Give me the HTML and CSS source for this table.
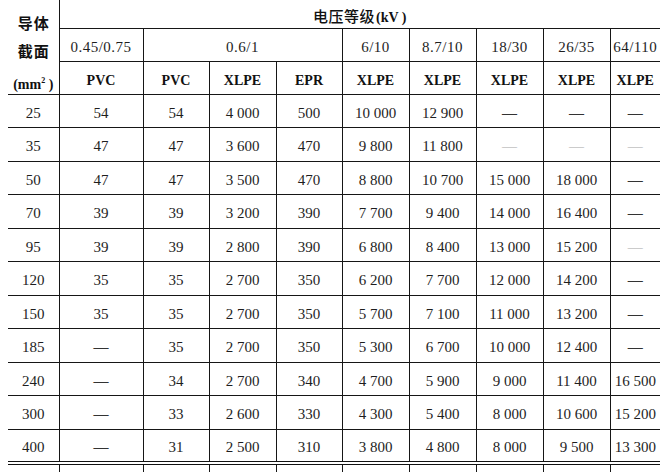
FILE: index.html
```html
<!DOCTYPE html>
<html lang="zh-CN">
<head>
<meta charset="utf-8">
<title>导体截面与电压等级</title>
<link rel="stylesheet" href="styles.css">
</head>
<body>
<div class="page">
<table class="t">
  <colgroup>
    <col class="c-lead"><col class="c-a"><col class="c-b"><col class="c-c"><col class="c-b">
    <col class="c-c"><col class="c-c"><col class="c-c"><col class="c-c"><col class="c-last">
  </colgroup>
  <tr class="h1">
    <th rowspan="3" class="lead">
      <div class="lead-box">
        <span class="cn l1">导体</span>
        <span class="cn l2">截面</span>
        <span class="unit l3">(mm<sup>2</sup> )</span>
      </div>
    </th>
    <th colspan="9" class="volt"><span class="cn">电压等级</span><span class="kv">(kV )</span></th>
  </tr>
  <tr class="h2">
    <td>0.45/0.75</td><td colspan="3">0.6/1</td><td>6/10</td><td>8.7/10</td><td>18/30</td><td>26/35</td><td>64/110</td>
  </tr>
  <tr class="h3">
    <td>PVC</td><td>PVC</td><td>XLPE</td><td>EPR</td><td>XLPE</td><td>XLPE</td><td>XLPE</td><td>XLPE</td><td>XLPE</td>
  </tr>
  <tr class="d"><td>25</td><td>54</td><td>54</td><td>4 000</td><td>500</td><td>10 000</td><td>12 900</td><td class="na">—</td><td class="na">—</td><td class="na">—</td></tr>
  <tr class="d"><td>35</td><td>47</td><td>47</td><td>3 600</td><td>470</td><td>9 800</td><td>11 800</td><td class="na lt">—</td><td class="na lt">—</td><td class="na lt">—</td></tr>
  <tr class="d"><td>50</td><td>47</td><td>47</td><td>3 500</td><td>470</td><td>8 800</td><td>10 700</td><td>15 000</td><td>18 000</td><td class="na">—</td></tr>
  <tr class="d"><td>70</td><td>39</td><td>39</td><td>3 200</td><td>390</td><td>7 700</td><td>9 400</td><td>14 000</td><td>16 400</td><td class="na">—</td></tr>
  <tr class="d"><td>95</td><td>39</td><td>39</td><td>2 800</td><td>390</td><td>6 800</td><td>8 400</td><td>13 000</td><td>15 200</td><td class="na lt">—</td></tr>
  <tr class="d"><td>120</td><td>35</td><td>35</td><td>2 700</td><td>350</td><td>6 200</td><td>7 700</td><td>12 000</td><td>14 200</td><td class="na">—</td></tr>
  <tr class="d"><td>150</td><td>35</td><td>35</td><td>2 700</td><td>350</td><td>5 700</td><td>7 100</td><td>11 000</td><td>13 200</td><td class="na">—</td></tr>
  <tr class="d"><td>185</td><td class="na">—</td><td>35</td><td>2 700</td><td>350</td><td>5 300</td><td>6 700</td><td>10 000</td><td>12 400</td><td class="na">—</td></tr>
  <tr class="d"><td>240</td><td class="na">—</td><td>34</td><td>2 700</td><td>340</td><td>4 700</td><td>5 900</td><td>9 000</td><td>11 400</td><td>16 500</td></tr>
  <tr class="d"><td>300</td><td class="na">—</td><td>33</td><td>2 600</td><td>330</td><td>4 300</td><td>5 400</td><td>8 000</td><td>10 600</td><td>15 200</td></tr>
  <tr class="d"><td>400</td><td class="na">—</td><td>31</td><td>2 500</td><td>310</td><td>3 800</td><td>4 800</td><td>8 000</td><td>9 500</td><td>13 300</td></tr>
  <tr class="tail"><td></td><td></td><td></td><td></td><td></td><td></td><td></td><td></td><td></td><td></td></tr>
</table>
</div>
</body>
</html>
```
FILE: styles.css
```css
html, body {
  margin: 0;
  padding: 0;
  background: #ffffff;
}

.page {
  padding: 0 0 0 8px;
  height: 472px;
  overflow: hidden;
}

.t {
  border-collapse: collapse;
  table-layout: fixed;
  width: 652px;
  font-family: "Liberation Serif", "Times New Roman", serif;
  font-size: 15px;
  color: #1e1e1e;
}

.c-lead { width: 51px; }
.c-a { width: 84px; }
.c-b { width: 66px; }
.c-c { width: 67px; }
.c-last { width: 50px; }

.t td, .t th {
  border: 1px solid #161616;
  padding: 4px 0 0 0;
  text-align: center;
  vertical-align: middle;
  font-weight: normal;
  white-space: nowrap;
  overflow: hidden;
}

.t tr > :first-child { border-left: none; }
.t tr > :last-child { border-right: none; }
.t tr.h1 > th { border-top: none; }

.h1 { height: 28px; }
.h2 { height: 33px; }
.h3 { height: 33px; }
.d { height: 33.5px; }
.tail { height: 12px; }

.cn {
  font-family: "Noto Sans CJK SC", sans-serif;
  font-weight: 700;
  color: #111;
}

.lead {
  vertical-align: top;
  padding: 0;
}

.lead-box {
  display: flex;
  flex-direction: column;
  align-items: center;
  padding-top: 10px;
}

.lead-box .cn {
  font-size: 15px;
  line-height: 18px;
  letter-spacing: 1px;
  padding-left: 1px;
}

.l2 { margin-top: 10px; }

.unit {
  margin-top: 17px;
  font-weight: 700;
  font-size: 14px;
  line-height: 16px;
  color: #111;
}

.unit sup {
  font-size: 8px;
  vertical-align: 6px;
  line-height: 0;
}

.volt {
  padding: 2px 20px 0 0;
}

.volt .cn {
  font-size: 15px;
  font-weight: 500;
  letter-spacing: 0.5px;
}

.kv {
  font-weight: 700;
  font-size: 14px;
  color: #111;
  padding-left: 1px;
}

.h2 td {
  letter-spacing: 0.5px;
  padding-top: 6px;
}

.h3 td {
  font-weight: 700;
  font-size: 14px;
  color: #111;
  padding-top: 6px;
}

.d td {
  padding-top: 5px;
}

.d td.na {
  font-weight: 700;
  color: #333;
}

.d td.lt {
  font-weight: 400;
  color: #a8a8a8;
}

.tail td {
  border-top: 4px double #111;
  border-bottom: none;
}
```
